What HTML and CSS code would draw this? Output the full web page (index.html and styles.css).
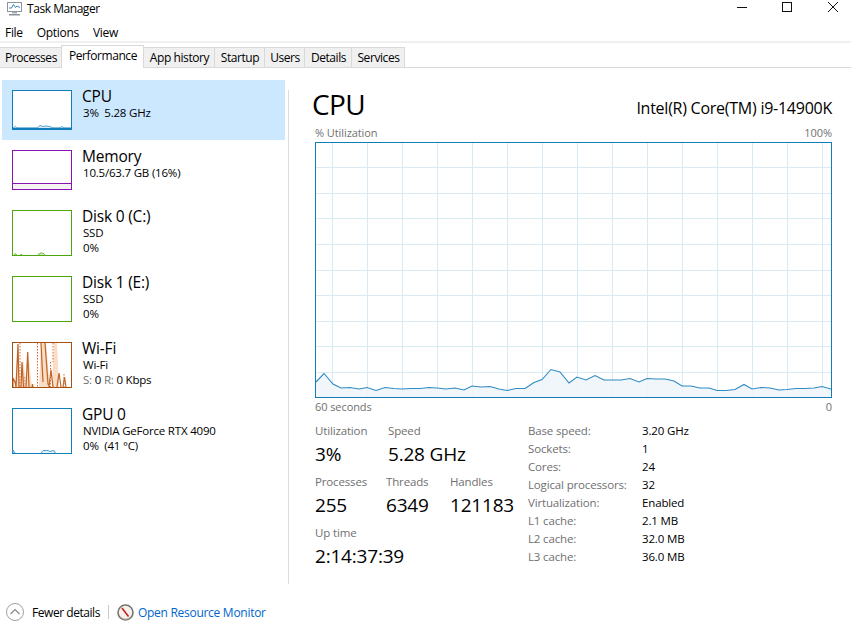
FILE: index.html
```html
<!DOCTYPE html>
<html lang="en">
<head>
<meta charset="utf-8">
<title>Task Manager</title>
<link rel="stylesheet" href="styles.css">
</head>
<body>
<div class="window">
  <header class="titlebar">
    <svg class="app-icon" width="17" height="15" viewBox="0 0 17 15">
      <rect x="1.5" y="1.5" width="14" height="9" fill="#fff" stroke="#8d9499"/>
      <path d="M3 7 L5.5 7 L7.5 3.5 L9.5 6.5 L11 5 L14 6.5" fill="none" stroke="#3d87b5"/>
      <path d="M6 11h5v1.5H6z" fill="#a9afb3"/><path d="M3 13h11v1.5H3z" fill="#8d9499"/>
    </svg>
    <span class="title-text">Task Manager</span>
    <div class="window-controls">
      <svg width="101" height="13" viewBox="0 0 101 13" fill="none" stroke="#111">
        <path d="M0 7.5h10"/>
        <rect x="45.5" y="2.5" width="9" height="9"/>
        <path d="M91 2l10 10M101 2L91 12"/>
      </svg>
    </div>
  </header>
  <nav class="menubar"><span>File</span><span>Options</span><span>View</span></nav>
  <div class="menu-rule"></div>
  <div class="tabs">
    <span class="tab tab-processes">Processes</span>
    <span class="tab tab-active">Performance</span>
    <span class="tab tab-app">App history</span>
    <span class="tab tab-startup">Startup</span>
    <span class="tab tab-users">Users</span>
    <span class="tab tab-details">Details</span>
    <span class="tab tab-services">Services</span>
  </div>
  <main class="main">
    <aside class="sidebar">
      <div class="item item-selected">
        <svg class="thumb" width="60" height="40" viewBox="0 0 60 40">
          <rect x=".5" y=".5" width="59" height="39" fill="#fff" stroke="#117dbb"/>
          <path d="M0 38.5h60" stroke="#117dbb" stroke-width="2"/>
          <path d="M1 38L3 36.5 5 38M25 38L28 35.5 31 36.5 34 36 38 36.5 41 38 M48 38l2-1.5 2 1.5" fill="#d9eaf4" stroke="#5da5d0"/>
        </svg>
        <div class="item-text"><div class="item-name">CPU</div><div class="item-sub">3%&nbsp; 5.28 GHz</div></div>
      </div>
      <div class="item">
        <svg class="thumb" width="60" height="40" viewBox="0 0 60 40">
          <rect x=".5" y=".5" width="59" height="39" fill="#fff" stroke="#8b12ae"/>
          <rect x="1" y="33" width="58" height="6" fill="#f4f2f3"/>
          <path d="M0 33.5h60" stroke="#8b12ae"/>
        </svg>
        <div class="item-text"><div class="item-name">Memory</div><div class="item-sub">10.5/63.7 GB (16%)</div></div>
      </div>
      <div class="item">
        <svg class="thumb" width="60" height="46" viewBox="0 0 60 46">
          <rect x=".5" y=".5" width="59" height="45" fill="#fff" stroke="#4da60c"/>
          <path d="M2 45l1-1.5 2 1.5M8 45l1-1 1 1M26 45l1-1.5 1 .5 1-1.5 1 1 1-.5 1 1 1 1" fill="#cfe8bd" stroke="#7cc04d"/>
        </svg>
        <div class="item-text"><div class="item-name">Disk 0 (C:)</div><div class="item-sub">SSD</div><div class="item-sub">0%</div></div>
      </div>
      <div class="item">
        <svg class="thumb" width="60" height="46" viewBox="0 0 60 46">
          <rect x=".5" y=".5" width="59" height="45" fill="#fff" stroke="#4da60c"/>
        </svg>
        <div class="item-text"><div class="item-name">Disk 1 (E:)</div><div class="item-sub">SSD</div><div class="item-sub">0%</div></div>
      </div>
      <div class="item">
        <svg class="thumb" width="60" height="46" viewBox="0 0 60 46">
          <rect x=".5" y=".5" width="59" height="45" fill="#fff"/>
          <path d="M3 45L6 1 8 45ZM9 45L11 18 15 45ZM14 45L16 10 20 45ZM27 45L29 1H34L38 45ZM40 45L42 1H45L47 45Z" fill="#fbdcc4"/>
          <path d="M1 45V36L3 40 4 45 6 2 7 45M9 45L10 20 11.5 45M14 45L15.7 10 17 45M20 45l.5-3 .5 3M29 1L31 40M33 1L36 42 38 45M37 45L39 28 41 45M45 45L47 31 49 45M51 45L52.5 35 54 45" fill="none" stroke="#bd6526" stroke-width="1.2"/>
          <path d="M8 1V45M12 35V45M25.5 1V45M38.5 20V45M41 1V20M52 32V45" fill="none" stroke="#e0622a" stroke-dasharray="1.5 1.5"/>
          <rect x=".5" y=".5" width="59" height="45" fill="none" stroke="#a7500f"/>
        </svg>
        <div class="item-text"><div class="item-name">Wi-Fi</div><div class="item-sub">Wi-Fi</div><div class="item-sub"><span class="muted">S:</span> 0 <span class="muted">R:</span> 0 Kbps</div></div>
      </div>
      <div class="item">
        <svg class="thumb" width="60" height="46" viewBox="0 0 60 46">
          <rect x=".5" y=".5" width="59" height="45" fill="#fff" stroke="#117dbb"/>
          <path d="M1 45V42l2 3M29 45l2-2.5h5l2 1 3-1 2 1V45" fill="#e6f1f8" stroke="#4e9dcb"/>
        </svg>
        <div class="item-text"><div class="item-name">GPU 0</div><div class="item-sub">NVIDIA GeForce RTX 4090</div><div class="item-sub">0%&nbsp; (41 °C)</div></div>
      </div>
    </aside>
    <div class="vrule"></div>
    <section class="content">
      <div class="heading">
        <h1 class="heading-title">CPU</h1>
        <div class="heading-model">Intel(R) Core(TM) i9-14900K</div>
      </div>
      <div class="axis axis-top"><span>% Utilization</span><span>100%</span></div>
      <svg class="chart" width="517" height="256" viewBox="315 142 517 256">
        <rect x="315" y="142" width="517" height="256" fill="#fff"/>
        <path fill="none" stroke="#d9eaf4" d="M332.5 142V398M367.5 142V398M402.5 142V398M437.5 142V398M472.5 142V398M507.5 142V398M542.5 142V398M577.5 142V398M612.5 142V398M647.5 142V398M682.5 142V398M717.5 142V398M752.5 142V398M787.5 142V398M822.5 142V398M315 167.5H832M315 193.5H832M315 218.5H832M315 244.5H832M315 270.5H832M315 295.5H832M315 321.5H832M315 346.5H832M315 372.5H832"/>
        <path fill="#eef4f9" fill-opacity=".85" d="M316 382L324 373.5 333 384 341 388 350 387.5 359 389 367 387.5 376 390.5 385 387.5 394 388.5 402 389 411 388.5 420 388.5 429 387.5 437 388 446 389 455 388 464 390 472 386 481 387 490 386.5 499 389 507 390.5 516 388.5 525 388.5 534 382.5 542 379.5 551 369.5 560 372 569 383 577 377 586 380 595 375.5 604 380 612 380 621 380 630 378.5 639 382 647 378.5 656 379 665 379 674 381 682 386 691 386 700 388 709 388 717 390.5 726 390.5 735 389.5 744 384.5 752 389 761 387.5 770 388 779 390 787 389.5 796 388.5 805 388.5 814 388 822 386.5 831 389V397H316Z"/>
        <path fill="none" stroke="#2f8bc2" stroke-width="1.1" d="M316 382L324 373.5 333 384 341 388 350 387.5 359 389 367 387.5 376 390.5 385 387.5 394 388.5 402 389 411 388.5 420 388.5 429 387.5 437 388 446 389 455 388 464 390 472 386 481 387 490 386.5 499 389 507 390.5 516 388.5 525 388.5 534 382.5 542 379.5 551 369.5 560 372 569 383 577 377 586 380 595 375.5 604 380 612 380 621 380 630 378.5 639 382 647 378.5 656 379 665 379 674 381 682 386 691 386 700 388 709 388 717 390.5 726 390.5 735 389.5 744 384.5 752 389 761 387.5 770 388 779 390 787 389.5 796 388.5 805 388.5 814 388 822 386.5 831 389"/>
        <rect x="315.5" y="142.5" width="516" height="255" fill="none" stroke="#117dbb"/>
      </svg>
      <div class="axis"><span>60 seconds</span><span>0</span></div>
      <div class="details">
        <div class="stats">
          <div class="stat-row">
            <div class="stat w-util"><div class="stat-label">Utilization</div><div class="stat-value">3%</div></div>
            <div class="stat"><div class="stat-label">Speed</div><div class="stat-value">5.28 GHz</div></div>
          </div>
          <div class="stat-row">
            <div class="stat w-proc"><div class="stat-label">Processes</div><div class="stat-value">255</div></div>
            <div class="stat w-thr"><div class="stat-label">Threads</div><div class="stat-value">6349</div></div>
            <div class="stat"><div class="stat-label">Handles</div><div class="stat-value">121183</div></div>
          </div>
          <div class="stat-row">
            <div class="stat"><div class="stat-label">Up time</div><div class="stat-value">2:14:37:39</div></div>
          </div>
        </div>
        <dl class="specs">
          <dt>Base speed:</dt><dd>3.20 GHz</dd>
          <dt>Sockets:</dt><dd>1</dd>
          <dt>Cores:</dt><dd>24</dd>
          <dt>Logical processors:</dt><dd>32</dd>
          <dt>Virtualization:</dt><dd>Enabled</dd>
          <dt>L1 cache:</dt><dd>2.1 MB</dd>
          <dt>L2 cache:</dt><dd>32.0 MB</dd>
          <dt>L3 cache:</dt><dd>36.0 MB</dd>
        </dl>
      </div>
    </section>
  </main>
  <footer class="footer">
    <svg class="fewer-icon" width="18" height="18" viewBox="0 0 18 18" fill="none">
      <circle cx="9" cy="9" r="8.5" stroke="#a0a0a0"/>
      <path d="M4.5 11L9 6.5 13.5 11" stroke="#8a8a8a" stroke-width="1.2"/>
    </svg>
    <span class="fewer-text">Fewer details</span>
    <span class="footer-rule"></span>
    <svg class="monitor-icon" width="17" height="17" viewBox="0 0 17 17">
      <circle cx="8.5" cy="8.5" r="7.5" fill="#f4f1ec" stroke="#77756f" stroke-width="1.6"/>
      <path d="M5 4L11.5 12.5" stroke="#c8201f" stroke-width="1.6"/>
      <path d="M4 13a6 6 0 0 0 9 0" fill="none" stroke="#c2bcb0"/>
    </svg>
    <a class="monitor-link">Open Resource Monitor</a>
  </footer>
</div>
</body>
</html>
```

FILE: styles.css
```css
* { box-sizing: border-box; }
html, body { margin: 0; padding: 0; background: #fff; }
body { font-family: "Open Sans", "Noto Sans", sans-serif; font-size: 12px; color: #000; }
.window { width: 851px; height: 630px; display: flex; flex-direction: column; overflow: hidden; }

.titlebar { height: 16px; display: flex; align-items: center; padding-left: 6px; }
.app-icon { flex: none; }
.title-text { margin-left: 4px; letter-spacing: -.45px; }
.window-controls { margin-left: auto; margin-right: 13px; height: 13px; align-self: flex-start; display: flex; }

.menubar { height: 25px; padding: 8px 0 0 5px; display: flex; gap: 14px; line-height: 18px; letter-spacing: -.3px; }
.menu-rule { height: 2px; background: #f0f0f0; }

.tabs { height: 25px; padding-top: 2px; display: flex; align-items: flex-end; border-bottom: 1px solid #d9d9d9; }
.tab { height: 20px; padding-left: 1px; background: #f0f0f0; border: 1px solid #d9d9d9; border-bottom: 0; border-left: 0; line-height: 20px; text-align: center; letter-spacing: -.42px; white-space: nowrap; }
.tab-processes { width: 62px; }
.tab-active { width: 83px; height: 23px; margin-bottom: -1px; background: #fff; border-left: 1px solid #d9d9d9; line-height: 19px; margin-left: -1px; }
.tab-app { width: 71px; }
.tab-startup { width: 50px; }
.tab-users { width: 40px; }
.tab-details { width: 47px; }
.tab-services { width: 53px; }

.main { flex: 1; min-height: 0; display: flex; padding-left: 2px; }
.sidebar { width: 283px; flex: none; padding-top: 12px; }
.item { display: flex; gap: 10px; padding: 10px 0 10px 10px; }
.item-selected { background: #cce8ff; }
.thumb { flex: none; display: block; }
.item-text { margin-top: -2px; }
.item-name { font-size: 15.5px; line-height: 16px; letter-spacing: -.2px; margin-bottom: 1px; }
.item-sub { margin-left: 1px; line-height: 15px; font-size: 11.5px; letter-spacing: -.2px; white-space: nowrap; }
.muted { color: #707070; }

.vrule { width: 1px; flex: none; margin: 22px 0 10px 3px; background: #dcdcdc; }
.content { width: 517px; flex: none; margin-left: 26px; padding-top: 17px; }
.heading { height: 39px; display: flex; justify-content: space-between; align-items: flex-end; }
.heading-title { margin: 0 0 1px -3px; font-size: 28px; font-weight: 400; line-height: 38px; letter-spacing: -.6px; }
.heading-model { font-size: 16px; line-height: 20px; padding-bottom: 6px; letter-spacing: -.25px; }
.axis { height: 18px; display: flex; justify-content: space-between; line-height: 18px; color: #707070; font-size: 11px; letter-spacing: -.08px; }
.chart { display: block; }

.details { display: flex; padding-top: 6px; }
.stats { width: 213px; flex: none; display: flex; flex-direction: column; gap: 5px; }
.stat-row { display: flex; }
.w-util { width: 73px; }
.w-proc { width: 71px; }
.w-thr { width: 64px; }
.stat-label { height: 18px; line-height: 18px; font-size: 11.5px; color: #707070; letter-spacing: -.15px; }
.stat-value { height: 28px; line-height: 28px; font-size: 19px; white-space: nowrap; letter-spacing: -.2px; }
.specs { margin: 0; display: grid; grid-template-columns: 114px auto; grid-auto-rows: 18px; line-height: 18px; font-size: 11.5px; letter-spacing: -.15px; }
.specs dt { color: #707070; white-space: nowrap; }
.specs dd { margin: 0; white-space: nowrap; }

.footer { height: 36px; flex: none; display: flex; align-items: center; padding: 0 0 0 6px; }
.fewer-icon { flex: none; }
.fewer-text { margin-left: 8px; letter-spacing: -.45px; }
.footer-rule { width: 1px; height: 14px; background: #c8c8c8; margin-left: 8px; }
.monitor-icon { flex: none; margin-left: 8px; }
.monitor-link { margin-left: 4px; color: #0066cc; letter-spacing: -.28px; }
```
